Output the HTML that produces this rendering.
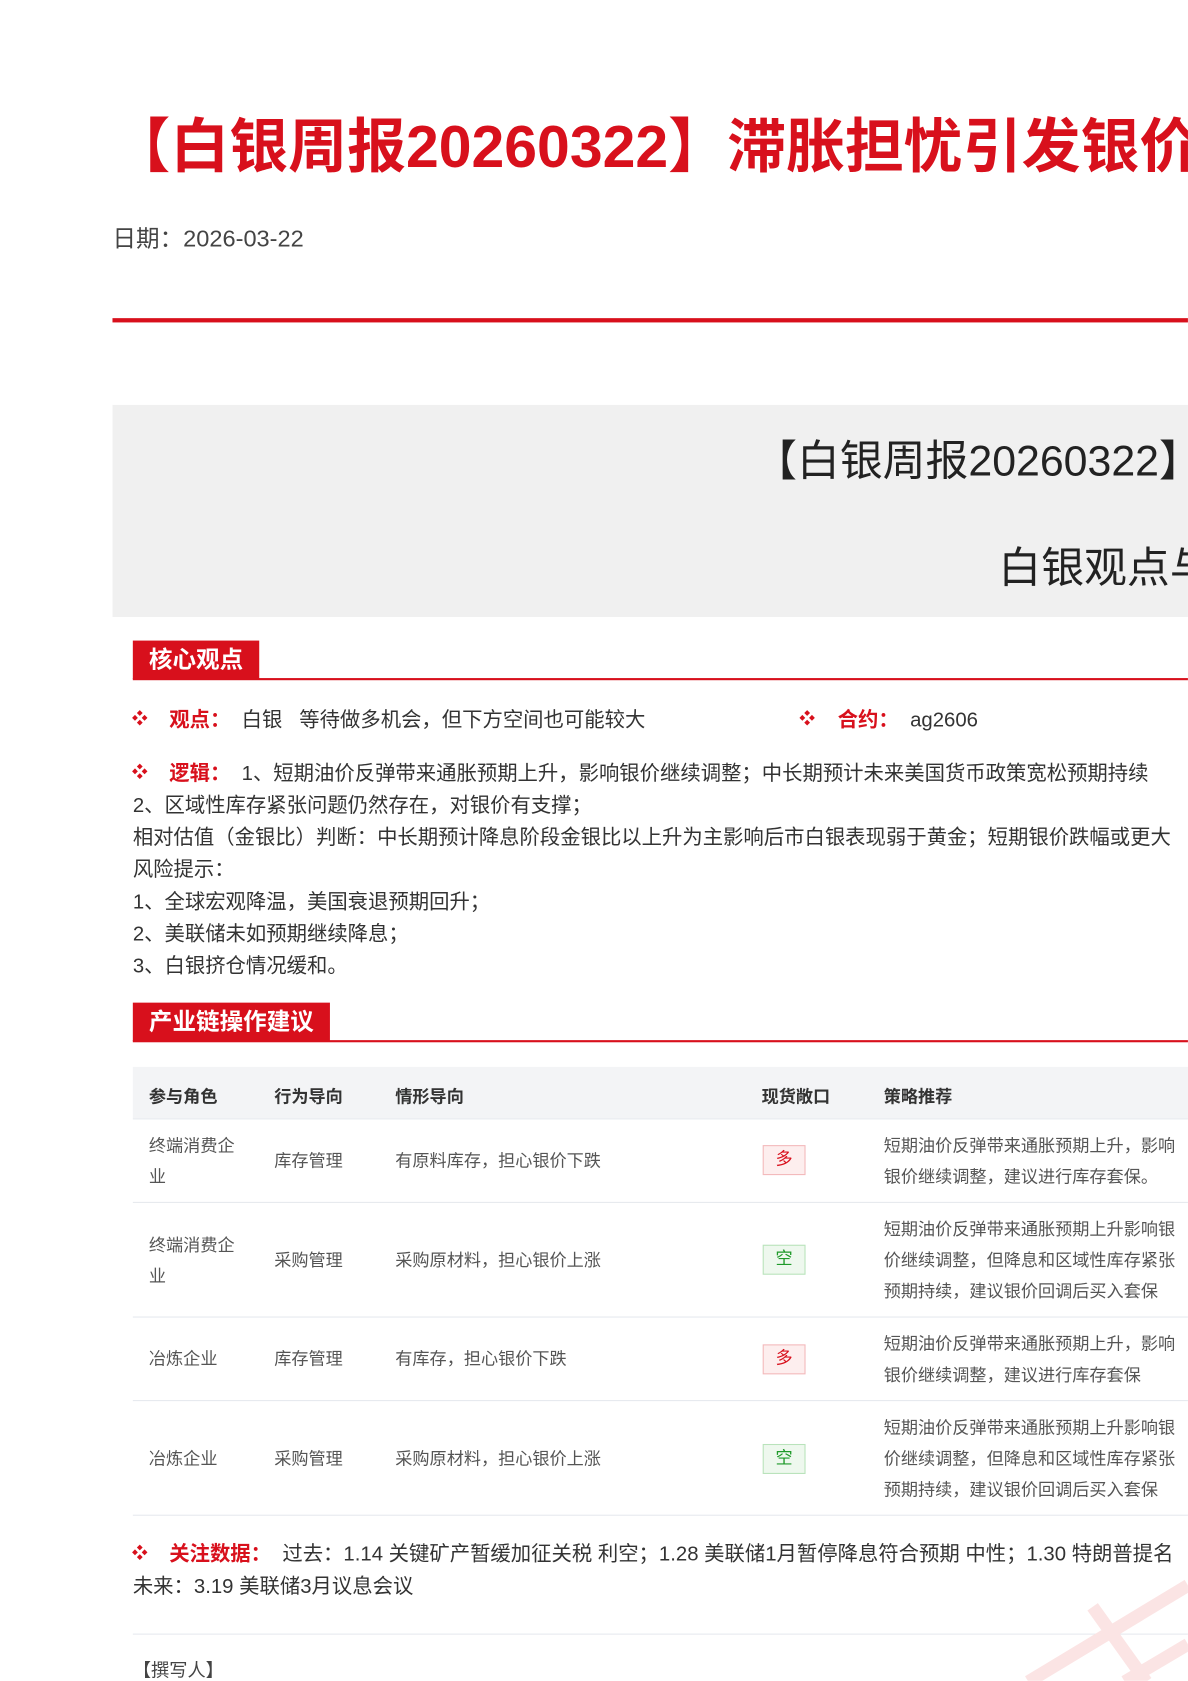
<!DOCTYPE html>
<html><head><meta charset="utf-8"><style>
html,body{margin:0;padding:0;background:#fff;overflow:hidden;width:1188px;height:1680px}
#w{position:absolute;left:0;top:0;width:1109px;height:1569px;transform:scale(1.0712);transform-origin:0 0;overflow:hidden;font-family:"Liberation Sans","Noto Sans CJK SC",sans-serif;color:#333}
.a{position:absolute;white-space:nowrap}
.red{color:#d8101c}
.b{font-weight:bold}
.bul{position:absolute;color:#d8101c;font-size:15px}
.t{font-size:19px;line-height:30px}
.hdr{position:absolute;background:#d8101c;color:#fff;font-size:22px;line-height:36px;padding:0 15px;font-weight:bold}
.hl{position:absolute;left:124px;right:0;height:2px;background:#d8101c}
.td{position:absolute;font-size:16px;color:#555;line-height:29px;white-space:nowrap}
.th{position:absolute;font-size:16px;color:#333;font-weight:bold;white-space:nowrap}
.tag{position:absolute;left:712px;width:38px;height:26px;font-size:16px;line-height:26px;text-align:center}
.duo{background:#fdeeee;border:1px solid #f3b9bb;color:#d8101c}
.kong{background:#eef8ee;border:1px solid #b9e3bb;color:#1f9a2a}
.rl{position:absolute;left:124px;right:0;height:1px;background:#e6e9ee}
</style></head><body><div id="w">
<div class="a red b" style="left:104px;top:104px;font-size:55px;line-height:66px">【白银周报20260322】滞胀担忧引发银价下跌</div>
<div class="a" style="left:105px;top:208px;font-size:22px;line-height:30px;color:#444">日期：2026-03-22</div>
<div style="position:absolute;left:105px;right:0;top:297px;height:4px;background:#d8101c"></div>
<div style="position:absolute;left:105px;right:0;top:378px;height:198px;background:#f0f0f0"></div>
<div class="a" style="left:704px;top:405px;font-size:40px;line-height:52px;color:#222">【白银周报20260322】滞胀担忧</div>
<div class="a" style="left:932px;top:505px;font-size:40px;line-height:52px;color:#222">白银观点与策略</div>

<div class="hdr" style="left:124px;top:598px">核心观点</div>
<div class="hl" style="top:633px"></div>

<div class="bul" style="left:123px;top:660px">❖</div>
<div class="a t" style="left:158px;top:658px"><span class="red b">观点：</span>&nbsp; 白银&nbsp;&nbsp; 等待做多机会，但下方空间也可能较大</div>
<div class="bul" style="left:746px;top:660px">❖</div>
<div class="a t" style="left:782px;top:658px"><span class="red b">合约：</span>&nbsp; ag2606</div>

<div class="bul" style="left:123px;top:710px">❖</div>
<div class="a t" style="left:158px;top:708px"><span class="red b">逻辑：</span>&nbsp; 1、短期油价反弹带来通胀预期上升，影响银价继续调整；中长期预计未来美国货币政策宽松预期持续</div>
<div class="a t" style="left:124px;top:738px">2、区域性库存紧张问题仍然存在，对银价有支撑；</div>
<div class="a t" style="left:124px;top:768px">相对估值（金银比）判断：中长期预计降息阶段金银比以上升为主影响后市白银表现弱于黄金；短期银价跌幅或更大</div>
<div class="a t" style="left:124px;top:798px">风险提示：</div>
<div class="a t" style="left:124px;top:828px">1、全球宏观降温，美国衰退预期回升；</div>
<div class="a t" style="left:124px;top:858px">2、美联储未如预期继续降息；</div>
<div class="a t" style="left:124px;top:888px">3、白银挤仓情况缓和。</div>

<div class="hdr" style="left:124px;top:936px">产业链操作建议</div>
<div class="hl" style="top:971px"></div>

<div style="position:absolute;left:124px;right:0;top:996px;height:48px;background:#f3f4f6"></div>
<div class="th" style="left:139px;top:1010px">参与角色</div>
<div class="th" style="left:256px;top:1010px">行为导向</div>
<div class="th" style="left:369px;top:1010px">情形导向</div>
<div class="th" style="left:711px;top:1010px">现货敞口</div>
<div class="th" style="left:825px;top:1010px">策略推荐</div>
<div class="rl" style="top:1044px"></div>

<div class="td" style="left:139px;top:1056px">终端消费企<br>业</div>
<div class="td" style="left:256px;top:1070px">库存管理</div>
<div class="td" style="left:369px;top:1070px">有原料库存，担心银价下跌</div>
<div class="tag duo" style="top:1069px">多</div>
<div class="td" style="left:825px;top:1056px">短期油价反弹带来通胀预期上升，影响<br>银价继续调整，建议进行库存套保。</div>
<div class="rl" style="top:1122px"></div>

<div class="td" style="left:139px;top:1149px">终端消费企<br>业</div>
<div class="td" style="left:256px;top:1163px">采购管理</div>
<div class="td" style="left:369px;top:1163px">采购原材料，担心银价上涨</div>
<div class="tag kong" style="top:1162px">空</div>
<div class="td" style="left:825px;top:1134px">短期油价反弹带来通胀预期上升影响银<br>价继续调整，但降息和区域性库存紧张<br>预期持续，建议银价回调后买入套保</div>
<div class="rl" style="top:1229px"></div>

<div class="td" style="left:139px;top:1255px">冶炼企业</div>
<div class="td" style="left:256px;top:1255px">库存管理</div>
<div class="td" style="left:369px;top:1255px">有库存，担心银价下跌</div>
<div class="tag duo" style="top:1255px">多</div>
<div class="td" style="left:825px;top:1241px">短期油价反弹带来通胀预期上升，影响<br>银价继续调整，建议进行库存套保</div>
<div class="rl" style="top:1307px"></div>

<div class="td" style="left:139px;top:1348px">冶炼企业</div>
<div class="td" style="left:256px;top:1348px">采购管理</div>
<div class="td" style="left:369px;top:1348px">采购原材料，担心银价上涨</div>
<div class="tag kong" style="top:1348px">空</div>
<div class="td" style="left:825px;top:1319px">短期油价反弹带来通胀预期上升影响银<br>价继续调整，但降息和区域性库存紧张<br>预期持续，建议银价回调后买入套保</div>
<div class="rl" style="top:1414px"></div>

<div class="bul" style="left:123px;top:1439px">❖</div>
<div class="a t" style="left:158px;top:1437px"><span class="red b">关注数据：</span>&nbsp; 过去：1.14 关键矿产暂缓加征关税 利空；1.28 美联储1月暂停降息符合预期 中性；1.30 特朗普提名</div>
<div class="a t" style="left:124px;top:1467px">未来：3.19 美联储3月议息会议</div>
<div class="rl" style="top:1525px"></div>
<div class="a" style="left:124px;top:1548px;font-size:17px;line-height:24px;color:#444">【撰写人】</div>
<svg style="position:absolute;left:900px;top:1440px" width="209" height="130"><path d="M60 130 L209 40 M150 130 L209 95 M120 60 L170 130" stroke="#fbe4e4" stroke-width="12" fill="none"/></svg>
</div></body></html>
